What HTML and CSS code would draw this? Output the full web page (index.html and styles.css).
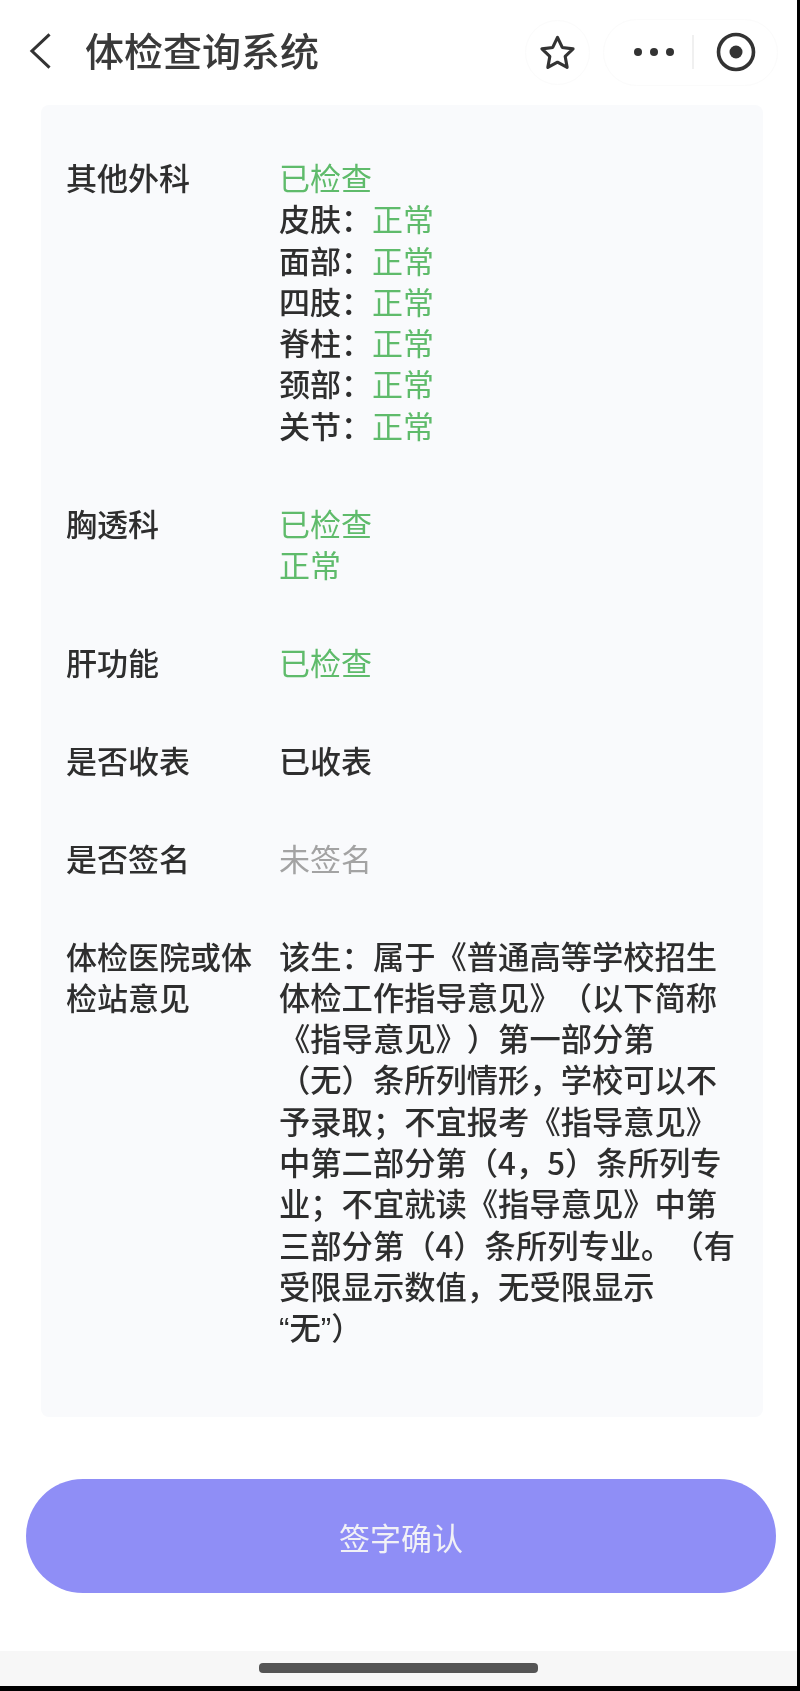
FILE: index.html
```html
<!DOCTYPE html>
<html lang="zh-CN">
<head>
<meta charset="utf-8">
<title>体检查询系统</title>
<link rel="stylesheet" href="styles.css">
</head>
<body>
<div class="screen">
  <header class="nav">
    <svg class="back" viewBox="0 0 24 40" aria-hidden="true"><path d="M21.5 2.5 3 20l18.5 17.5"/></svg>
    <h1 class="title">体检查询系统</h1>
    <div class="nav-actions">
      <div class="star-btn">
        <svg class="star" viewBox="0 0 38 38" aria-hidden="true"><path d="M19 3.500l4.900 10.300 11.100 1.500-8.100 7.800 2 11.200L19 29l-9.900 5.300 2-11.200-8.100-7.800 11.100-1.500z"/></svg>
      </div>
      <div class="capsule">
        <div class="dots"><i></i><i></i><i></i></div>
        <span class="divider"></span>
        <svg class="target" viewBox="0 0 40 40" aria-hidden="true"><circle class="ring" cx="20" cy="20" r="17.500"/><circle class="core" cx="20" cy="20" r="6.500"/></svg>
      </div>
    </div>
  </header>

  <main class="card">
    <div class="row">
      <div class="label">其他外科</div>
      <div class="value">
        <div class="ok">已检查</div>
        <div>皮肤：<span class="ok">正常</span></div>
        <div>面部：<span class="ok">正常</span></div>
        <div>四肢：<span class="ok">正常</span></div>
        <div>脊柱：<span class="ok">正常</span></div>
        <div>颈部：<span class="ok">正常</span></div>
        <div>关节：<span class="ok">正常</span></div>
      </div>
    </div>
    <div class="row">
      <div class="label">胸透科</div>
      <div class="value"><div class="ok">已检查</div><div class="ok">正常</div></div>
    </div>
    <div class="row">
      <div class="label">肝功能</div>
      <div class="value ok">已检查</div>
    </div>
    <div class="row">
      <div class="label">是否收表</div>
      <div class="value">已收表</div>
    </div>
    <div class="row">
      <div class="label">是否签名</div>
      <div class="value muted">未签名</div>
    </div>
    <div class="row">
      <div class="label">体检医院或体检站意见</div>
      <div class="value opinion">该生：属于《普通高等学校招生<br>体检工作指导意见》（以下简称<br>《指导意见》）第一部分第<br>（无）条所列情形，学校可以不<br>予录取；不宜报考《指导意见》<br>中第二部分第（4，5）条所列专<br>业；不宜就读《指导意见》中第<br>三部分第（4）条所列专业。（有<br>受限显示数值，无受限显示<br><span class="latin">“</span>无<span class="latin">”</span>）</div>
    </div>
  </main>

  <button class="confirm" type="button">签字确认</button>

  <div class="home-area"><span class="home-bar"></span></div>
</div>
</body>
</html>
```

FILE: styles.css
```css
* { box-sizing: border-box; }

html, body { margin: 0; padding: 0; }

body {
  width: 800px;
  height: 1691px;
  background: #000;
  overflow: hidden;
  font-family: "Noto Sans CJK SC", "Liberation Sans", sans-serif;
  color: #2e2e2e;
  text-spacing-trim: space-all;
  font-feature-settings: "chws" 0;
}

.screen {
  width: 797px;
  height: 1686px;
  background: #fff;
  display: flex;
  flex-direction: column;
  filter: blur(0.5px);
}

.nav {
  height: 105px;
  flex: none;
  display: flex;
  align-items: center;
  padding: 0 19px 3px 29px;
}

.back {
  width: 23px;
  height: 38px;
  flex: none;
  fill: none;
  stroke: #333;
  stroke-width: 3.2;
}

.title {
  margin: 0 0 4px 33px;
  font-size: 39px;
  line-height: 50px;
  font-weight: 500;
  color: #3a3a3a;
}

.nav-actions {
  margin-left: auto;
  margin-top: 2px;
  display: flex;
  align-items: center;
  gap: 13px;
}

.star-btn {
  width: 65px;
  height: 65px;
  border: 1px solid #fbfbfb;
  border-radius: 50%;
  display: flex;
  align-items: center;
  justify-content: center;
}

.star {
  width: 37px;
  height: 37px;
  fill: none;
  stroke: #333;
  stroke-width: 3.2;
  stroke-linejoin: round;
}

.capsule {
  width: 175px;
  height: 67px;
  border: 1px solid #fbfbfb;
  border-radius: 34px;
  display: flex;
  align-items: center;
  padding-left: 30px;
}

.dots {
  display: flex;
  gap: 8px;
}

.dots i {
  width: 8px;
  height: 8px;
  border-radius: 50%;
  background: #333;
}

.divider {
  width: 2px;
  height: 34px;
  margin-left: 18px;
  background: #f0f0f0;
}

.target {
  width: 40px;
  height: 40px;
  margin-left: 22px;
}

.ring { fill: none; stroke: #333; stroke-width: 3.6; }
.core { fill: #333; }

.card {
  flex: none;
  width: 722px;
  height: 1312px;
  margin-left: 41px;
  padding: 51px 25px 0;
  background: #f9fafc;
  border-radius: 8px;
  font-size: 31px;
  line-height: 41.3px;
  font-weight: 500;
}

.row {
  display: flex;
  margin-bottom: 56.6px;
}

.label {
  flex: none;
  width: 190px;
  margin-right: 23px;
}

.value { flex: 1; white-space: nowrap; }

.opinion { font-size: 31.3px; }

.latin { font-family: "Liberation Sans", sans-serif; }

.ok { color: #5fbb6b; font-weight: 400; }
.muted { color: #a3a3a3; font-weight: 400; }

.confirm {
  flex: none;
  width: 750px;
  height: 114px;
  margin: 62px 0 0 26px;
  border: 0;
  border-radius: 57px;
  background: #8f8ef6;
  color: #f1f1f6;
  font: inherit;
  font-size: 31px;
}

.home-area {
  flex: none;
  height: 35px;
  margin-top: 58px;
  background: #f7f7f7;
  display: flex;
  justify-content: center;
  padding-top: 12px;
}

.home-bar {
  width: 279px;
  height: 10px;
  border-radius: 4px;
  background: #555;
}
```
